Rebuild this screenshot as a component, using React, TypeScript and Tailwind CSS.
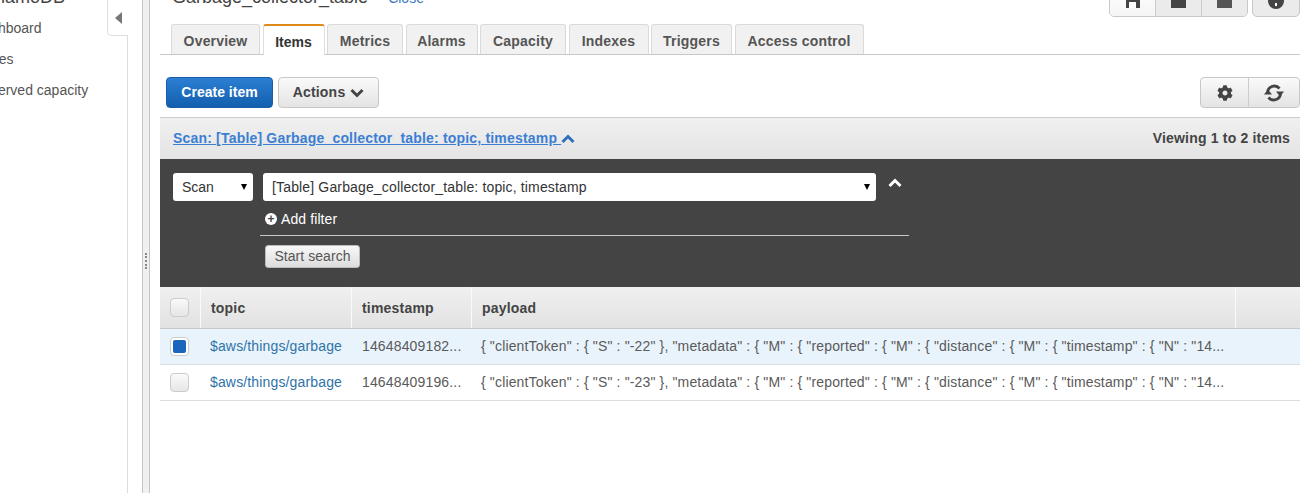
import React from "react";
import { FaCog } from "react-icons/fa";

const tabs = [
  { name: "Overview", width: "w-[89px]" },
  { name: "Metrics", width: "w-[76px]" },
  { name: "Alarms", width: "w-[72px]" },
  { name: "Capacity", width: "w-[86px]" },
  { name: "Indexes", width: "w-[80px]" },
  { name: "Triggers", width: "w-[81px]" },
  { name: "Access control", width: "w-[129px]" },
];

const payload1 =
  '{ "clientToken" : { "S" : "-22" }, "metadata" : { "M" : { "reported" : { "M" : { "distance" : { "M" : { "timestamp" : { "N" : "14...';
const payload2 =
  '{ "clientToken" : { "S" : "-23" }, "metadata" : { "M" : { "reported" : { "M" : { "distance" : { "M" : { "timestamp" : { "N" : "14...';

function Chevron({ up, color, className }: { up?: boolean; color: string; className?: string }) {
  return (
    <svg width="14" height="10" viewBox="0 0 14 10" fill="none" className={className}>
      <path d={up ? "M1.500 8L7 2.500 12.500 8" : "M1.500 2L7 7.500 12.500 2"} stroke={color} strokeWidth="3" />
    </svg>
  );
}

function Refresh() {
  return (
    <svg width="20" height="18" viewBox="0 0 20 18" fill="none">
      <path d="M3.500 9A6.800 6.800 0 0 1 15.500 4.500" stroke="#444" strokeWidth="2.800" />
      <path d="M16.500 9A6.800 6.800 0 0 1 4.500 13.500" stroke="#444" strokeWidth="2.800" />
      <path d="M12 7.500h8L16 12.500z" fill="#444" />
      <path d="M0 10.500h8L4 5.500z" fill="#444" />
    </svg>
  );
}

function Tab({ name, width }: { name: string; width: string }) {
  return (
    <div className={`flex h-[30px] items-center justify-center rounded-t-[3px] border-x border-t border-[#dadada] bg-[#f1f1f1] pt-[3px] text-[14px] font-bold tracking-[0.2px] text-[#555555] ${width}`}>
      {name}
    </div>
  );
}

function Row({ selected, time, payload }: { selected?: boolean; time: string; payload: string }) {
  return (
    <div className={`flex h-[36px] items-center border-b border-[#dddddd] text-[14px] tracking-[0.15px] ${selected ? "bg-[#e9f3fc]" : "bg-white"}`}>
      <div className="flex w-[40px] justify-center pr-[1px]">
        <div className={`flex h-[19px] w-[19px] items-center justify-center rounded-[4px] border border-[#cccccc] ${selected ? "bg-white" : "bg-gradient-to-b from-[#fafafa] to-[#e6e6e6]"}`}>
          {selected && <div className="h-[13px] w-[13px] rounded-[2px] bg-[#1a66bd]" />}
        </div>
      </div>
      <div className="w-[151px] truncate pl-[10px] text-[#2e73a8]">$aws/things/garbage</div>
      <div className="w-[120px] truncate pl-[11px] text-[#5a5a5a]">{time}</div>
      <div className="flex-1 truncate pl-[10px] text-[#5a5a5a]">{payload}</div>
    </div>
  );
}

export default function App() {
  return (
    <div className="flex h-[493px] w-[1307px] overflow-hidden bg-white font-['Liberation_Sans',Arial,sans-serif] text-[#444444]">
      {/* left nav, scrolled off on the left */}
      <div className="relative h-full w-[128px] shrink-0 border-r border-[#dddddd] text-[14px] text-[#555555]">
        <div className="-ml-[27px] -mt-[12px] flex flex-col gap-[12px] whitespace-nowrap">
          <div className="h-[19px] text-[18px] leading-[19px] text-[#444444]">DynamoDB</div>
          <div className="h-[19px] leading-[19px]">Dashboard</div>
          <div className="h-[19px] leading-[19px]">Tables</div>
          <div className="h-[19px] leading-[19px]">Reserved capacity</div>
        </div>
        <div className="absolute right-[-1px] top-0 flex h-[36px] w-[21px] items-center justify-center rounded-bl-[5px] border-b border-l border-[#dddddd] bg-white">
          <div className="h-0 w-0 border-y-[6px] border-r-[7px] border-y-transparent border-r-[#777777]" />
        </div>
      </div>

      {/* splitter */}
      <div className="ml-[14px] flex h-full w-[8px] shrink-0 items-center justify-center border-x border-[#c4c4c4] bg-[#f0f0f0]">
        <div className="mt-[28px] h-[16px] w-[2px] border-l-2 border-dotted border-[#888888]" />
      </div>

      <div className="ml-[10px] w-[1140px] shrink-0">
        {/* title row */}
        <div className="flex h-[17px] items-end justify-between">
          <div className="mb-[10px] flex items-baseline whitespace-nowrap">
            <span className="ml-[12px] text-[18px] leading-[18px] text-[#444444]">Garbage_collector_table</span>
            <span className="ml-[20px] text-[14px] leading-[18px] text-[#3b78c2]">Close</span>
          </div>
          <div className="flex items-end gap-[4px]">
            <div className="flex h-[34px] overflow-hidden rounded-b-[5px] border border-[#c8c8c8]">
              <div className="flex w-[46px] items-end justify-center border-r border-[#cccccc] bg-gradient-to-b from-[#ffffff] to-[#f5f5f5] pb-[8px]">
                <div className="flex h-[10px] w-[14px] items-end bg-[#444444] pl-[3px]"><div className="h-[6px] w-[7px] bg-white" /></div>
              </div>
              <div className="flex w-[46px] items-end justify-center border-r border-[#cccccc] bg-[#ebebeb] pb-[8px]">
                <div className="h-[10px] w-[15px] bg-[#444444]" />
              </div>
              <div className="flex w-[45px] items-end justify-center bg-[#ebebeb] pb-[8px]">
                <div className="h-[10px] w-[15px] bg-[#555555]" />
              </div>
            </div>
            <div className="flex h-[34px] w-[48px] items-end justify-center rounded-b-[5px] border border-[#c8c8c8] bg-[#ebebeb] pb-[7px]">
              <div className="flex h-[16px] w-[16px] items-end justify-center rounded-full bg-[#444444] pb-[3px]">
                <div className="h-[3px] w-[2px] bg-white" />
              </div>
            </div>
          </div>
        </div>

        {/* tabs */}
        <div className="mt-[7px] flex h-[31px] items-end gap-[2.5px] border-b border-[#c8c8c8] pl-[11px]">
          <Tab {...tabs[0]} />
          <div className="relative -mb-px flex h-[31px] w-[62px] items-center justify-center rounded-t-[3px] border-x border-t-2 border-[#dddddd] border-t-[#dd8a1b] bg-white pt-[3px] text-[14px] font-bold text-[#333333]">
            Items
          </div>
          {tabs.slice(1).map((t) => (
            <Tab key={t.name} {...t} />
          ))}
        </div>

        {/* toolbar */}
        <div className="flex items-center justify-between pl-[6px] pt-[22px]">
          <div className="flex gap-[5px]">
            <div className="flex h-[31px] w-[107px] items-center justify-center rounded-[4px] border border-[#1a5ea8] bg-gradient-to-b from-[#2b7fd3] to-[#125fae] text-[14px] font-bold text-white">
              Create item
            </div>
            <div className="flex h-[31px] w-[101px] items-center justify-center gap-[5px] rounded-[4px] border border-[#c8c8c8] bg-gradient-to-b from-[#fafafa] to-[#e4e4e4] text-[14px] font-bold tracking-[0.2px] text-[#444444]">
              Actions
              <Chevron color="#444" />
            </div>
          </div>
          <div className="flex h-[31px] overflow-hidden rounded-[4px] border border-[#c8c8c8] bg-gradient-to-b from-[#fafafa] to-[#e4e4e4]">
            <div className="flex w-[48px] items-center justify-center border-r border-[#cccccc]">
              <FaCog size={16} color="#444" />
            </div>
            <div className="flex w-[50px] items-center justify-center">
              <Refresh />
            </div>
          </div>
        </div>

        {/* scan bar */}
        <div className="mt-[9px] flex h-[42px] items-center justify-between border-t border-[#cccccc] bg-gradient-to-b from-[#f0f0f0] to-[#e4e4e4] pl-[13px] pr-[10px] text-[14px] font-bold tracking-[0.185px]">
          <div className="flex items-center text-[#3b7fd4]">
            <span className="whitespace-pre underline">Scan: [Table] Garbage_collector_table: topic, timestamp </span>
            <Chevron up color="#2f70b8" />
          </div>
          <span className="text-[#444444]">Viewing 1 to 2 items</span>
        </div>

        {/* search panel */}
        <div className="h-[128px] bg-[#444444] pl-[13px] pt-[14px] text-[14px]">
          <div className="flex items-start">
            <div className="relative flex h-[28px] w-[80px] items-center rounded-[3px] bg-white pl-[9px] text-[#333333]">
              Scan
              <div className="absolute right-[6px] top-[11px] h-0 w-0 border-x-[3.500px] border-t-[6px] border-x-transparent border-t-black" />
            </div>
            <div className="relative ml-[10px] flex h-[28px] w-[613px] items-center rounded-[3px] bg-white pl-[9px] tracking-[0.15px] text-[#333333]">
              [Table] Garbage_collector_table: topic, timestamp
              <div className="absolute right-[6px] top-[11px] h-0 w-0 border-x-[3.500px] border-t-[6px] border-x-transparent border-t-black" />
            </div>
            <Chevron up color="#fff" className="ml-[12px] mt-[5px]" />
          </div>
          <div className="ml-[87px] w-[649px]">
            <div className="flex h-[35px] items-center gap-[4px] border-b border-[#c8c8c8] pl-[5px] pt-[2px] tracking-[0.1px] text-white">
              <div className="flex h-[12px] w-[12px] items-center justify-center rounded-full bg-white">
                <div className="text-[12px] font-bold leading-[12px] text-[#444444]">+</div>
              </div>
              Add filter
            </div>
            <div className="ml-[5px] mt-[9px] flex h-[23px] w-[95px] items-center justify-center rounded-[3px] border border-[#bbbbbb] bg-gradient-to-b from-[#f8f8f8] to-[#dddddd] tracking-[0.05px] text-[#555555]">
              Start search
            </div>
          </div>
        </div>

        {/* table */}
        <div className="flex h-[42px] items-stretch border-b border-[#c8c8c8] bg-gradient-to-b from-[#f0f0f0] to-[#e2e2e2] text-[14px] font-bold tracking-[0.2px] text-[#444444]">
          <div className="flex w-[41px] items-center justify-center border-r border-[#fafafa] pr-[2px]">
            <div className="h-[19px] w-[19px] rounded-[4px] border border-[#cccccc] bg-gradient-to-b from-[#fafafa] to-[#e6e6e6]" />
          </div>
          <div className="flex w-[151px] items-center border-r border-[#fafafa] pl-[10px] pt-[2px]">topic</div>
          <div className="flex w-[120px] items-center border-r border-[#fafafa] pl-[10px] pt-[2px]">timestamp</div>
          <div className="flex w-[764px] items-center border-r border-[#fafafa] pl-[10px] pt-[2px]">payload</div>
        </div>
        <Row selected time="14648409182..." payload={payload1} />
        <Row time="14648409196..." payload={payload2} />
      </div>
    </div>
  );
}
